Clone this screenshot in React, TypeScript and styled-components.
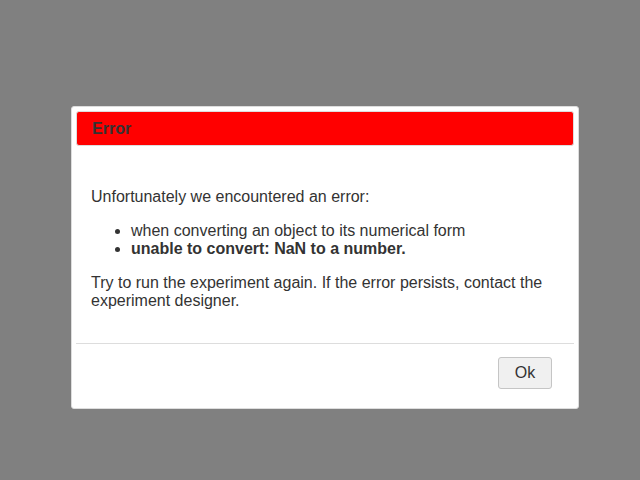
import React from "react";
import styled, { createGlobalStyle } from "styled-components";

const GlobalStyle = createGlobalStyle`
  html, body {
    margin: 0;
    padding: 0;
    background: #808080;
    width: 640px;
    height: 480px;
    overflow: hidden;
  }
  * { box-sizing: border-box; }
`;

const Page = styled.div`
  width: 640px;
  height: 480px;
  padding: 106px 0 0 71px;
  font-family: "Liberation Sans", Arial, sans-serif;
`;

const Dialog = styled.div`
  width: 508px;
  height: 303px;
  background: #fff;
  border: 1px solid #dddddd;
  border-radius: 3px;
  padding: 4px;
  display: flex;
  flex-direction: column;
`;

const Header = styled.div`
  height: 35px;
  background: #ff0000;
  border: 1px solid #dddddd;
  border-radius: 3px;
  display: flex;
  align-items: center;
  padding: 0 0 0 15px;
  font-size: 16px;
  font-weight: bold;
  color: #333333;
`;

const Content = styled.div`
  flex: 1;
  padding: 42px 14px 0 15px;
  font-size: 16px;
  line-height: 18px;
  color: #333333;
`;

const Para = styled.p`
  margin: 0 0 16px 0;
`;

const List = styled.ul`
  margin: 16px 0 16px 0;
  padding-left: 40px;
`;

const Item = styled.li<{ $bold?: boolean }>`
  font-weight: ${(p) => (p.$bold ? "bold" : "normal")};
`;

const ButtonPane = styled.div`
  border-top: 1px solid #dddddd;
  display: flex;
  justify-content: flex-end;
  padding: 13px 22px 15px 0;
`;

const Button = styled.button`
  width: 54px;
  height: 32px;
  background: #f0f0f0;
  border: 1px solid #c5c5c5;
  border-radius: 3px;
  font-family: "Liberation Sans", Arial, sans-serif;
  font-size: 16px;
  color: #333333;
  padding: 0;
`;

export default function App() {
  return (
    <>
      <GlobalStyle />
      <Page>
        <Dialog>
          <Header>Error</Header>
          <Content>
            <Para>Unfortunately we encountered an error:</Para>
            <List>
              <Item>when converting an object to its numerical form</Item>
              <Item $bold>unable to convert: NaN to a number.</Item>
            </List>
            <Para>
              Try to run the experiment again. If the error persists, contact the
              experiment designer.
            </Para>
          </Content>
          <ButtonPane>
            <Button>Ok</Button>
          </ButtonPane>
        </Dialog>
      </Page>
    </>
  );
}
